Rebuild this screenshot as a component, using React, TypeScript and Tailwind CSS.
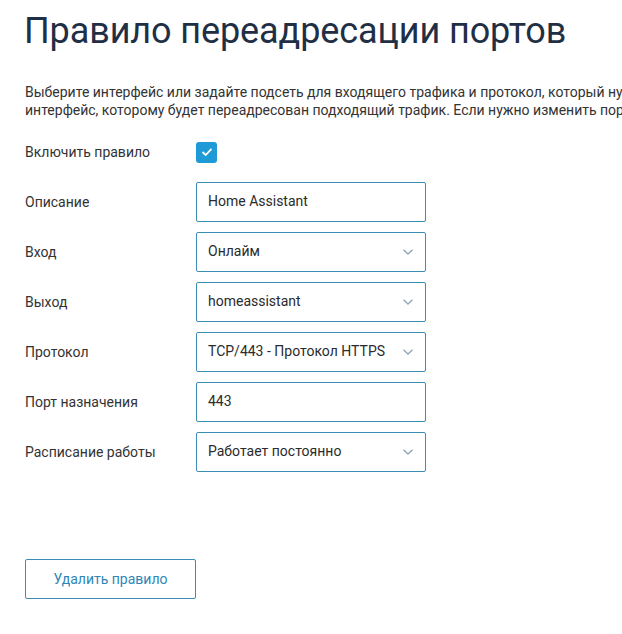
import React from "react";

const Chevron = () => (
  <svg width="12" height="8" viewBox="0 0 12 8" className="shrink-0">
    <path d="M1.5 1.8 L6 6 L10.5 1.8" fill="none" stroke="#8fa6b9" strokeWidth="1.3" />
  </svg>
);

const Field = ({ value, select }: { value: string; select?: boolean }) => (
  <div className="w-[230px] h-[40px] border border-[#3b8db3] rounded-[2px] flex items-center justify-between pl-[11px] pr-[11px] text-[14px] text-[#2b2b2b]">
    <span className="whitespace-nowrap -mt-[1px]">{value}</span>
    {select && <Chevron />}
  </div>
);

const Row = ({ label, children }: { label: string; children: React.ReactNode }) => (
  <div className="flex items-center h-[40px]">
    <div className="w-[171px] text-[14px] text-[#333333]">{label}</div>
    {children}
  </div>
);

export default function App() {
  return (
    <div
      className="w-[622px] h-[634px] bg-white overflow-hidden pl-[25px]"
      style={{ fontFamily: "Roboto, 'Noto Sans', sans-serif" }}
    >
      <h1 className="pt-[9px] text-[36px] leading-[44px] text-[#1f2f45] font-normal whitespace-nowrap -ml-[1px] tracking-[-0.1px]">
        Правило переадресации портов
      </h1>
      <div className="mt-[30px] text-[14px] leading-[18px] text-[#333333] whitespace-nowrap">
        <div>Выберите интерфейс или задайте подсеть для входящего трафика и протокол, который нужно переадресовать, а также</div>
        <div>интерфейс, которому будет переадресован подходящий трафик. Если нужно изменить порт назначения, укажите его.</div>
      </div>
      <div className="mt-[13px] flex flex-col gap-[10px]">
        <Row label="Включить правило">
          <div className="w-[21px] h-[21px] rounded-[3px] bg-[#1e9ad6] flex items-center justify-center">
            <svg width="12" height="10" viewBox="0 0 12 10">
              <path d="M1.5 5 L4.7 8 L10.5 1.8" fill="none" stroke="white" strokeWidth="1.8" />
            </svg>
          </div>
        </Row>
        <Row label="Описание">
          <Field value="Home Assistant" />
        </Row>
        <Row label="Вход">
          <Field value="Онлайм" select />
        </Row>
        <Row label="Выход">
          <Field value="homeassistant" select />
        </Row>
        <Row label="Протокол">
          <Field value="TCP/443 - Протокол HTTPS" select />
        </Row>
        <Row label="Порт назначения">
          <Field value="443" />
        </Row>
        <Row label="Расписание работы">
          <Field value="Работает постоянно" select />
        </Row>
      </div>
      <button className="mt-[87px] w-[171px] h-[40px] border border-[#3b8db3] rounded-[2px] text-[14px] text-[#2e86b8] bg-white">
        Удалить правило
      </button>
    </div>
  );
}
